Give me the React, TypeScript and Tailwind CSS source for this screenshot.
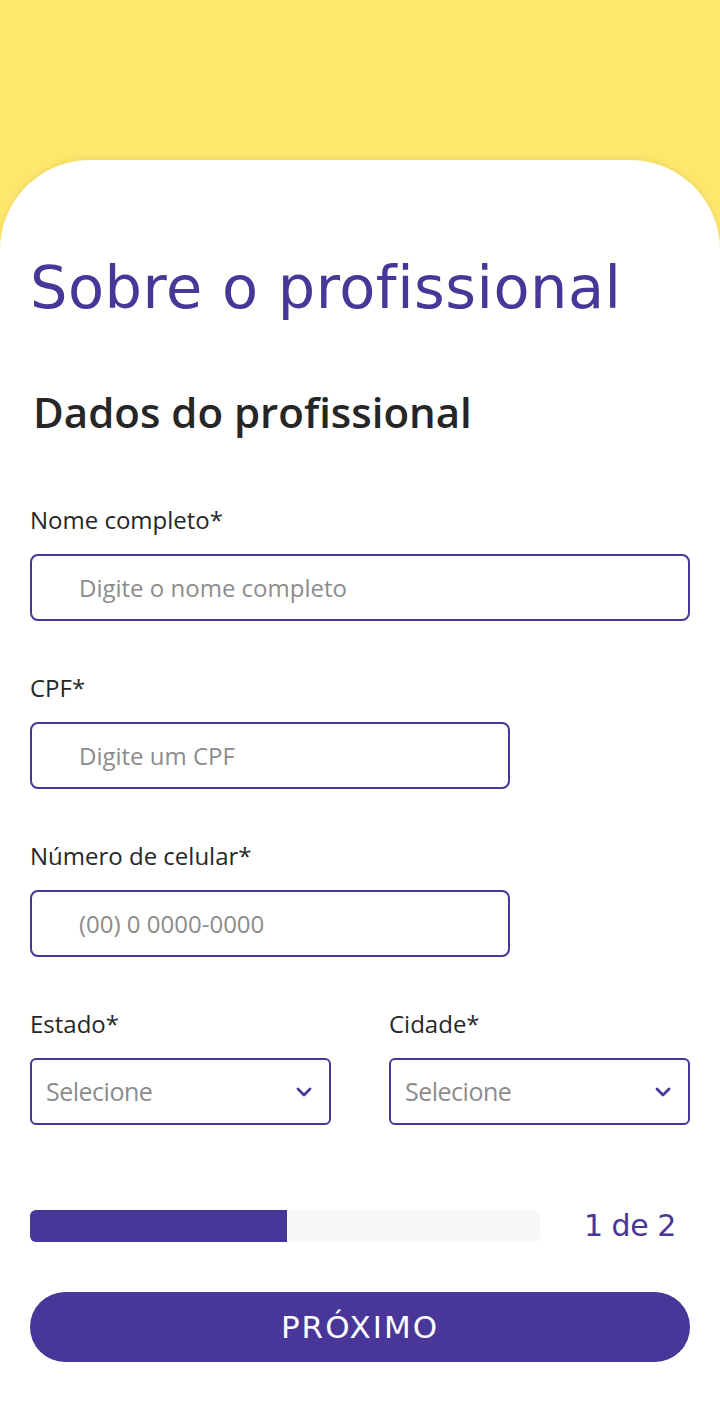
import React from 'react';

const PURPLE = 'text-[#483698]';

function Field({
  label,
  placeholder,
  width,
}: {
  label: string;
  placeholder: string;
  width: string;
}) {
  return (
    <div className="flex flex-col">
      <label className="text-[24px] leading-[32px] text-[#262626] h-[32px]">{label}</label>
      <div
        className={`mt-[18px] h-[67px] ${width} rounded-[8px] border-2 border-[#483698] flex items-center pl-[47px] text-[24px] text-[#8c8c8c]`}
      >
        {placeholder}
      </div>
    </div>
  );
}

function Select({ label }: { label: string }) {
  return (
    <div className="flex flex-col flex-1">
      <label className="text-[24px] leading-[32px] text-[#262626] h-[32px]">{label}</label>
      <div className="mt-[18px] h-[67px] rounded-[6px] border-2 border-[#483698] flex items-center justify-between pl-[14px] pr-[17px] text-[25px] tracking-[-0.5px] text-[#8c8c8c]">
        <span>Selecione</span>
        <svg width="16" height="10" viewBox="0 0 16 10" fill="none">
          <path
            d="M2 2l6 6 6-6"
            stroke="#483698"
            strokeWidth="2.8"
            strokeLinecap="round"
            strokeLinejoin="round"
          />
        </svg>
      </div>
    </div>
  );
}

export default function App() {
  return (
    <div
      className="min-h-[1426px] bg-[#ffe66d] pt-[160px]"
      style={{ fontFamily: '"Open Sans", sans-serif' }}
    >
      <div className="min-h-[1266px] bg-white rounded-t-[90px] shadow-[0_-2px_6px_rgba(0,0,0,0.06)] px-[30px] pt-[88px]">
        <h1
          className={`text-[59px] leading-[80px] ${PURPLE} tracking-[0.5px]`}
          style={{ fontFamily: '"DejaVu Sans", sans-serif' }}
        >
          Sobre o profissional
        </h1>
        <h2 className="mt-[56px] pl-[3px] text-[42px] leading-[56px] font-semibold text-[#262626]">
          Dados do profissional
        </h2>
        <div className="mt-[64px] flex flex-col gap-[51px]">
          <Field label="Nome completo*" placeholder="Digite o nome completo" width="w-full" />
          <Field label="CPF*" placeholder="Digite um CPF" width="w-[480px]" />
          <Field label="Número de celular*" placeholder="(00) 0 0000-0000" width="w-[480px]" />
          <div className="flex gap-[58px]">
            <Select label="Estado*" />
            <Select label="Cidade*" />
          </div>
        </div>
        <div className="mt-[85px] flex items-center">
          <div className="w-[510px] h-[32px] rounded-[6px] bg-[#f7f7f7] overflow-hidden">
            <div className="w-[257px] h-full bg-[#483698]" />
          </div>
          <span
            className={`ml-[44px] text-[30px] leading-[32px] ${PURPLE} tracking-[-0.5px]`}
            style={{ fontFamily: '"DejaVu Sans", sans-serif' }}
          >
            1 de 2
          </span>
        </div>
        <button
          type="button"
          className="mt-[50px] w-full h-[70px] rounded-full bg-[#483698] text-white text-[31px] tracking-[2px]"
          style={{ fontFamily: '"DejaVu Sans", sans-serif' }}
        >
          PRÓXIMO
        </button>
      </div>
    </div>
  );
}
